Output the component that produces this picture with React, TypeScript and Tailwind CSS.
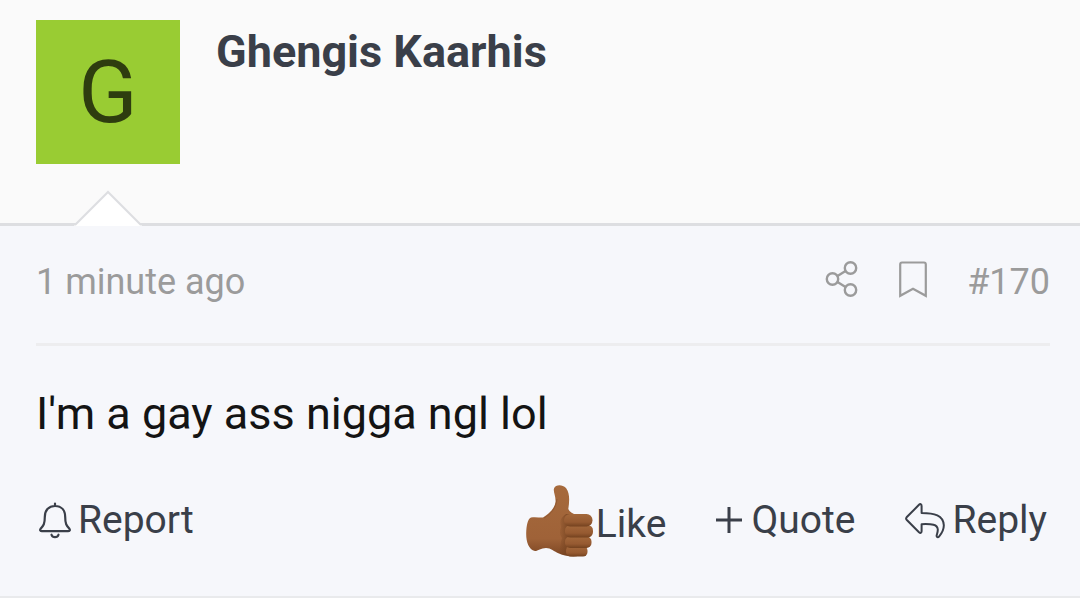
import React from 'react';

const ShareIcon = () => (
  <svg width="34" height="41" viewBox="0 0 34 41" fill="none" stroke="currentColor" strokeWidth="2.4" aria-hidden="true">
    <circle cx="25.5" cy="8" r="5.7" />
    <circle cx="7.5" cy="19" r="5.7" />
    <circle cx="25.5" cy="30" r="5.7" />
    <path d="M12.5 16 L20.5 11 M12.5 22 L20.5 27" />
  </svg>
);

const BookmarkIcon = () => (
  <svg width="28" height="41" viewBox="0 0 28 41" fill="none" stroke="currentColor" strokeWidth="2.2" aria-hidden="true">
    <path d="M1.2 35.8 V4.5 Q1.2 2.5 3 2.5 H25 Q26.8 2.5 26.8 4.5 V35.8 L14 28.8 Z" />
  </svg>
);

const BellIcon = () => (
  <svg width="34" height="38" viewBox="0 0 34 38" fill="none" stroke="currentColor" strokeWidth="2.2" strokeLinecap="round" strokeLinejoin="round" aria-hidden="true">
    <path d="M17 2.5 V5 M17 5 C10.5 5 6.8 9.5 6.8 16 C6.8 23 5.5 24.5 2.8 27.5 C1.4 29.3 2.4 30.2 4 30.2 H30 C31.6 30.2 32.6 29.3 31.2 27.5 C28.5 24.5 27.2 23 27.2 16 C27.2 9.5 23.5 5 17 5 Z" />
    <path d="M13.5 33.7 C14.5 37 19.5 37 20.5 33.7" />
  </svg>
);

const PlusIcon = () => (
  <svg width="28" height="28" viewBox="0 0 28 28" fill="none" stroke="currentColor" strokeWidth="3" aria-hidden="true">
    <path d="M14 1 V27 M1 14 H27" />
  </svg>
);

const ReplyIcon = () => (
  <svg width="42" height="38" viewBox="0 0 42 38" fill="none" stroke="currentColor" strokeWidth="2" strokeLinejoin="round" aria-hidden="true">
    <path d="M2.6 16.3 Q1.6 17.5 2.6 18.7 L15 31.3 C16.4 32.5 17.6 32 17.6 30.3 V23.2 C28 22.8 33.5 23.5 33.8 28.5 C33.9 30.8 33.3 32.2 32.7 34.2 C32.3 36.3 34 36.8 35.2 35.3 C37.8 32.2 40 28.8 39.8 24 C39.2 14.5 30.5 12 17.6 12 V5 C17.6 3 16.2 2.6 15 3.8 Z" />
  </svg>
);

const ThumbIcon = () => (
  <svg width="72" height="80" viewBox="0 0 72 80" aria-hidden="true">
    <defs>
      <linearGradient id="palm" x1="0" y1="0" x2="0" y2="1">
        <stop offset="0" stopColor="#a66a3c" />
        <stop offset="0.75" stopColor="#9f6238" />
        <stop offset="1" stopColor="#7c4623" />
      </linearGradient>
      <linearGradient id="finger" x1="0" y1="0" x2="0" y2="1">
        <stop offset="0" stopColor="#a3683b" />
        <stop offset="0.65" stopColor="#965a31" />
        <stop offset="1" stopColor="#74421f" />
      </linearGradient>
      <linearGradient id="crease" x1="0" y1="0" x2="1" y2="0">
        <stop offset="0" stopColor="#74421f" stopOpacity="0" />
        <stop offset="1" stopColor="#74421f" />
      </linearGradient>
    </defs>
    <path
      d="M7 33.5 C11 32.8 15 33.6 19 33.5 C25 30 31 24 31.5 18 C32 12 29 8 30 4.5 C31.5 0.5 38 0 42 4 C46 9 45.5 17 44.3 25 C45.5 28 48.5 29.5 52 30.5 L60 70 C53 74 42 72.5 35 69.5 C30 67.5 27 64 22 64 C17 64.2 14 67 11 67 C4.5 65.5 2 57 2.2 49 C2.4 42 3.5 35 7 33.5 Z"
      fill="url(#palm)"
    />
    <path d="M42 30 C35 35 36 38 37 43 C35 49 36 51 38 54 C36 59 37 64 34 69 C37 71 42 72 47 72 V30 Z" fill="url(#crease)" />
    <path d="M20 34 C27 30 32 24 33 15" fill="none" stroke="#915831" strokeWidth="1" />
    <rect x="42" y="62" width="21.5" height="10.5" rx="4.5" fill="url(#finger)" />
    <rect x="41" y="52.5" width="26.5" height="11.5" rx="5" fill="url(#finger)" />
    <rect x="41" y="41" width="28" height="12.5" rx="5.5" fill="url(#finger)" />
    <rect x="40" y="30" width="28.5" height="12.5" rx="6" fill="url(#finger)" />
  </svg>
);

type ActionButtonProps = {
  icon: React.ReactNode;
  label: string;
  className?: string;
};

const ActionButton: React.FC<ActionButtonProps> = ({ icon, label, className = 'gap-1.5' }) => (
  <button type="button" className={`flex items-center ${className}`}>
    {icon}
    <span>{label}</span>
  </button>
);

const App: React.FC = () => {
  return (
    <article className="border-b-2 border-[#e9eaec] bg-[#f6f7fb] font-['Roboto',sans-serif] text-[#3a3f49]">
      <header className="relative flex items-start gap-9 border-b-3 border-[#dddee1] bg-[#fafafa] px-9 pt-5 pb-[59px]">
        <a href="#profile" className="flex size-36 items-center justify-center bg-[#99cc33] text-[87px] leading-none text-[#2e3d0f]">
          G
        </a>
        <h4 className="pt-1 text-[45px] leading-[56px] font-bold">
          <a href="#profile">Ghengis Kaarhis</a>
        </h4>
        {/* pointer over the divider */}
        <svg className="absolute -bottom-[3px] left-[74px]" width="68" height="36" viewBox="0 0 68 36" aria-hidden="true">
          <path d="M0 36 L34 2 L68 36 Z" fill="#ffffff" />
          <path d="M1 35 L34 2 L67 35" fill="none" stroke="#dddee1" strokeWidth="2" />
        </svg>
      </header>

      <div className="pr-[30px] pl-9">
        <div className="flex items-center justify-between border-b-3 border-[#ededef] pt-[34px] pb-[38px] text-4xl leading-[45px] text-[#9b9b9b]">
          <a href="#post-170">
            <time>1 minute ago</time>
          </a>
          <div className="flex items-start gap-10">
            <a href="#share" aria-label="Share">
              <ShareIcon />
            </a>
            <a href="#bookmark" aria-label="Add bookmark">
              <BookmarkIcon />
            </a>
            <a href="#post-170">#170</a>
          </div>
        </div>

        <p className="pt-9 text-[45px] leading-[64px] text-[#141414]">I'm a gay ass nigga ngl lol</p>

        <div className="flex items-center justify-between pt-[30px] pr-[3px] pb-8 pl-0.5 text-[39px] leading-[48px]">
          <ActionButton icon={<BellIcon />} label="Report" />
          <div className="flex items-center gap-[49px]">
            <ActionButton icon={<ThumbIcon />} label="Like" className="pt-2" />
            <ActionButton icon={<PlusIcon />} label="Quote" className="gap-2" />
            <ActionButton icon={<ReplyIcon />} label="Reply" />
          </div>
        </div>
      </div>
    </article>
  );
};

export default App;
